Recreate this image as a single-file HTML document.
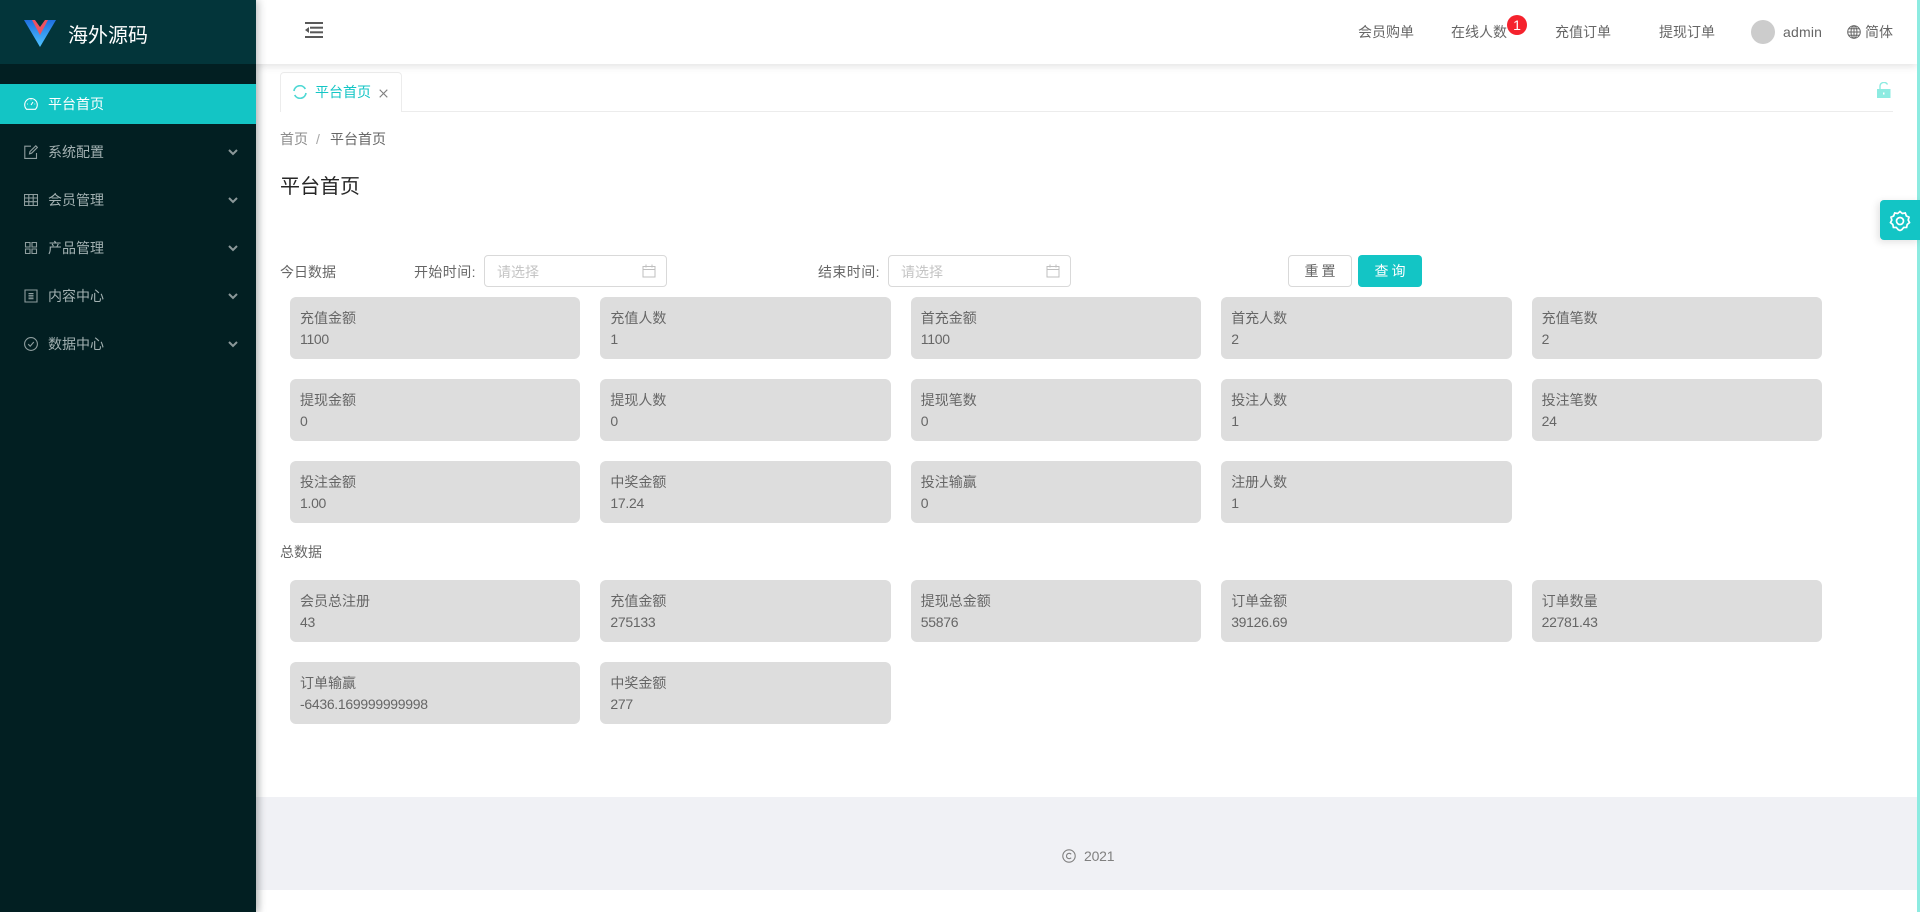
<!DOCTYPE html>
<html lang="zh"><head><meta charset="utf-8"><title>平台首页</title>
<style>
*{box-sizing:border-box;margin:0;padding:0}
html,body{width:1920px;height:912px;overflow:hidden;background:#fff}
body{position:relative;font:14px/20px "Liberation Sans","Noto Sans CJK SC",sans-serif;color:#666}
.a{position:absolute;white-space:nowrap}
#side{position:absolute;left:0;top:0;width:256px;height:912px;background:#021f22;box-shadow:2px 0 8px rgba(29,35,41,.3);z-index:5}
#logo{position:absolute;left:0;top:0;width:256px;height:64px;background:#03353a}
.mi{position:absolute;left:48px;color:#a3b1b2;line-height:20px}
.ic{position:absolute;left:24px;width:14px;height:14px}
.ch{position:absolute;left:228px;width:10px;height:10px}
#hd{position:absolute;left:256px;top:0;width:1661px;height:64px;background:#fff;box-shadow:0 2px 8px rgba(0,0,0,.12);z-index:3}
.c{position:absolute;width:290.4px;height:62px;background:#ddd;border-radius:6px;padding:11px 10px 0;color:#666;line-height:21px}
.c i{font-style:normal;letter-spacing:-.3px}
.inp{position:absolute;top:255px;height:32px;width:183px;border:1px solid #d9d9d9;border-radius:4px;background:#fff;color:#c4c4c4;padding:6px 12px 0}
.inp svg{position:absolute;right:10px;top:8px}
</style></head><body>
<div id="side">
<div id="logo"></div>
<svg class="a" style="left:24px;top:20px" width="32" height="27" viewBox="0 0 32 27"><defs><linearGradient id="g" x1="0" y1="0" x2="0" y2="1"><stop offset="0" stop-color="#1f6fe0"/><stop offset="1" stop-color="#4fc3ff"/></linearGradient></defs><path d="M0 0H32L16 27Z" fill="url(#g)"/><path d="M8 0H24L16 15Z" fill="#ef5261"/><path d="M11 0H21L16 7Z" fill="#03353a"/></svg>
<div class="a" style="left:68px;top:22px;font-size:20px;line-height:28px;color:#fff">海外源码</div>
<div class="a" style="left:0;top:84px;width:256px;height:40px;background:#13c5c5"></div>
<svg class="ic" style="top:97px" viewBox="0 0 14 14" fill="none" stroke="#fff" stroke-width="1.1"><path d="M2.600 12.300A6.300 6.300 0 1 1 11.400 12.300Z"/><path d="M7 8L9 5M3 7H3.800M10.500 7H11.200M7 2.500V3.200"/></svg>
<div class="mi" style="top:94px;color:#fff">平台首页</div>

<svg class="ic" style="top:145px" viewBox="0 0 14 14" fill="none" stroke="#8f9e9f" stroke-width="1.1"><path d="M12.500 8V13.400H.8V1.200H7M5.500 8.800L6 6.500L11.800 .8L13.400 2.400L7.600 8.200Z"/></svg>
<div class="mi" style="top:142px">系统配置</div>
<svg class="ch" style="top:147px" viewBox="0 0 10 10" fill="none" stroke="#8b9899" stroke-width="2"><path d="M1 3L5 7L9 3"/></svg>

<svg class="ic" style="top:193px" viewBox="0 0 14 14" fill="none" stroke="#8f9e9f" stroke-width="1.1"><path d="M.5 1.500H13.500V12.500H.5ZM.5 5H13.500M.5 8.700H13.500M4.800 1.500V12.500M9.200 1.500V12.500"/></svg>
<div class="mi" style="top:190px">会员管理</div>
<svg class="ch" style="top:195px" viewBox="0 0 10 10" fill="none" stroke="#8b9899" stroke-width="2"><path d="M1 3L5 7L9 3"/></svg>

<svg class="ic" style="top:241px" viewBox="0 0 14 14" fill="none" stroke="#8f9e9f" stroke-width="1.1"><path d="M1.500 1.500H6V6H1.500ZM8 1.500H12.500V6H8ZM1.500 8H6V12.500H1.500ZM8 8H12.500V12.500H8Z"/></svg>
<div class="mi" style="top:238px">产品管理</div>
<svg class="ch" style="top:243px" viewBox="0 0 10 10" fill="none" stroke="#8b9899" stroke-width="2"><path d="M1 3L5 7L9 3"/></svg>

<svg class="ic" style="top:289px" viewBox="0 0 14 14" fill="none" stroke="#8f9e9f" stroke-width="1.1"><path d="M1 1H13V13H1ZM4.500 4.500H9.500M4.500 6.300H9.500M4.500 8H9.500M4.500 9.700H9.500"/></svg>
<div class="mi" style="top:286px">内容中心</div>
<svg class="ch" style="top:291px" viewBox="0 0 10 10" fill="none" stroke="#8b9899" stroke-width="2"><path d="M1 3L5 7L9 3"/></svg>

<svg class="ic" style="top:337px" viewBox="0 0 14 14" fill="none" stroke="#8f9e9f" stroke-width="1.1"><circle cx="7" cy="7" r="6.400"/><path d="M4.200 7.200L6.200 9.200L9.800 5"/></svg>
<div class="mi" style="top:334px">数据中心</div>
<svg class="ch" style="top:339px" viewBox="0 0 10 10" fill="none" stroke="#8b9899" stroke-width="2"><path d="M1 3L5 7L9 3"/></svg>
</div>

<div id="hd">
<svg class="a" style="left:49px;top:22px" width="18" height="16" viewBox="0 0 18 16" fill="#595959"><rect x="0" y="0" width="18" height="2"/><rect x="5" y="4.700" width="13" height="2"/><rect x="5" y="9.300" width="13" height="2"/><rect x="0" y="14" width="18" height="2"/><path d="M0 8L4 5V11Z"/></svg>
<div class="a" style="left:1102px;top:22px">会员购单</div>
<div class="a" style="left:1195px;top:22px">在线人数</div>
<div class="a" style="left:1251px;top:15px;width:20px;height:20px;border-radius:50%;background:#f5222d;color:#fff;text-align:center;font-size:14px;line-height:20px">1</div>
<div class="a" style="left:1299px;top:22px">充值订单</div>
<div class="a" style="left:1403px;top:22px">提现订单</div>
<div class="a" style="left:1495px;top:20px;width:24px;height:24px;border-radius:50%;background:#ccc"></div>
<div class="a" style="left:1527px;top:22px;letter-spacing:.2px">admin</div>
<svg class="a" style="left:1591px;top:25px" width="14" height="14" viewBox="0 0 14 14" fill="none" stroke="#666" stroke-width="1"><circle cx="7" cy="7" r="6.300"/><ellipse cx="7" cy="7" rx="3" ry="6.300"/><path d="M7 .7V13.300M.7 7H13.300M1.500 3.800H12.500M1.500 10.200H12.500"/></svg>
<div class="a" style="left:1609px;top:22px">简体</div>
</div>

<div class="a" style="left:256px;top:64px;width:8px;height:848px;background:linear-gradient(90deg,rgba(0,0,0,.06),rgba(0,0,0,0));z-index:2"></div>

<div class="a" style="left:280px;top:111px;width:1613px;height:1px;background:#ececec"></div>
<div class="a" style="left:280px;top:72px;width:122px;height:40px;background:#fff;border:1px solid #ececec;border-bottom:0;border-radius:4px 4px 0 0"></div>
<svg class="a" style="left:293px;top:85px" width="14" height="14" viewBox="0 0 14 14" fill="none" stroke="#4fd8d4" stroke-width="1.700"><path d="M1 6A6 6 0 0 1 12.300 4M13 8A6 6 0 0 1 1.700 10"/></svg>
<div class="a" style="left:315px;top:82px;color:#13c5c5">平台首页</div>
<svg class="a" style="left:379px;top:89px" width="9" height="9" viewBox="0 0 9 9" stroke="#808080" stroke-width="1.100"><path d="M.7 .7L8.300 8.300M8.300 .7L.7 8.300"/></svg>
<svg class="a" style="left:1877px;top:82px" width="15" height="16" viewBox="0 0 15 16"><path d="M3 8V4A4 4 0 0 1 10.500 2.500" fill="none" stroke="#8debe1" stroke-width="1.400"/><rect x="0" y="7" width="13.500" height="9" fill="#8debe1"/><rect x="6" y="10.500" width="1.500" height="2" fill="#fff"/></svg>

<div class="a" style="left:280px;top:129px;color:#8c8c8c">首页</div>
<div class="a" style="left:316px;top:129px;color:#a6a6a6">/</div>
<div class="a" style="left:330px;top:129px">平台首页</div>
<div class="a" style="left:280px;top:173px;font-size:20px;line-height:28px;color:#262626">平台首页</div>

<div class="a" style="left:280px;top:262px">今日数据</div>
<div class="a" style="left:414px;top:262px;letter-spacing:.4px">开始时间:</div>
<div class="inp" style="left:484px">请选择<svg width="14" height="14" viewBox="0 0 14 14" fill="none" stroke="#bfbfbf" stroke-width="1"><path d="M1 2.500H13V13H1ZM1 5.500H13M4 .5V3.500M10 .5V3.500"/></svg></div>
<div class="a" style="left:818px;top:262px;letter-spacing:.4px">结束时间:</div>
<div class="inp" style="left:888px">请选择<svg width="14" height="14" viewBox="0 0 14 14" fill="none" stroke="#bfbfbf" stroke-width="1"><path d="M1 2.500H13V13H1ZM1 5.500H13M4 .5V3.500M10 .5V3.500"/></svg></div>
<div class="a" style="left:1288px;top:255px;width:64px;height:32px;border:1px solid #d9d9d9;border-radius:4px;text-align:center;line-height:30px;letter-spacing:3px;padding-left:3px">重置</div>
<div class="a" style="left:1358px;top:255px;width:64px;height:32px;background:#13c5c5;border-radius:4px;color:#fff;text-align:center;line-height:32px;letter-spacing:3px;padding-left:3px">查询</div>

<div class="c" style="left:290px;top:297px">充值金额<br><i>1100</i></div>
<div class="c" style="left:600.400px;top:297px">充值人数<br><i>1</i></div>
<div class="c" style="left:910.800px;top:297px">首充金额<br><i>1100</i></div>
<div class="c" style="left:1221.200px;top:297px">首充人数<br><i>2</i></div>
<div class="c" style="left:1531.600px;top:297px">充值笔数<br><i>2</i></div>

<div class="c" style="left:290px;top:379px">提现金额<br><i>0</i></div>
<div class="c" style="left:600.400px;top:379px">提现人数<br><i>0</i></div>
<div class="c" style="left:910.800px;top:379px">提现笔数<br><i>0</i></div>
<div class="c" style="left:1221.200px;top:379px">投注人数<br><i>1</i></div>
<div class="c" style="left:1531.600px;top:379px">投注笔数<br><i>24</i></div>

<div class="c" style="left:290px;top:461px">投注金额<br><i>1.00</i></div>
<div class="c" style="left:600.400px;top:461px">中奖金额<br><i>17.24</i></div>
<div class="c" style="left:910.800px;top:461px">投注输赢<br><i>0</i></div>
<div class="c" style="left:1221.200px;top:461px">注册人数<br><i>1</i></div>

<div class="a" style="left:280px;top:542px">总数据</div>

<div class="c" style="left:290px;top:580px">会员总注册<br><i>43</i></div>
<div class="c" style="left:600.400px;top:580px">充值金额<br><i>275133</i></div>
<div class="c" style="left:910.800px;top:580px">提现总金额<br><i>55876</i></div>
<div class="c" style="left:1221.200px;top:580px">订单金额<br><i>39126.69</i></div>
<div class="c" style="left:1531.600px;top:580px">订单数量<br><i>22781.43</i></div>

<div class="c" style="left:290px;top:662px">订单输赢<br><i>-6436.169999999998</i></div>
<div class="c" style="left:600.400px;top:662px">中奖金额<br><i>277</i></div>

<div class="a" style="left:256px;top:797px;width:1661px;height:93px;background:#f0f1f5"></div>
<svg class="a" style="left:1062px;top:849px" width="14" height="14" viewBox="0 0 14 14" fill="none" stroke="#808080" stroke-width="1.100"><circle cx="7" cy="7" r="6.200"/><path d="M9.200 5.200A2.700 2.700 0 1 0 9.200 8.800"/></svg>
<div class="a" style="left:1084px;top:846px;color:#808080;letter-spacing:-.2px">2021</div>

<div class="a" style="left:1917px;top:0;width:3px;height:912px;background:#8debe1;z-index:6"></div>
<div class="a" style="left:1880px;top:200px;width:40px;height:40px;background:#13c5c5;border-radius:4px 0 0 4px;box-shadow:-2px 2px 8px rgba(0,0,0,.12);z-index:7"></div>
<svg class="a" style="left:1889px;top:210px;z-index:8" width="22" height="22" viewBox="0 0 22 22" fill="none" stroke="#fff" stroke-width="1.700"><path d="M11 1.500L13.300 3.500L16.300 3L17.300 5.900L20 7.200L19.200 10L20.500 12.600L18.200 14.500L17.600 17.400L14.700 17.500L12.700 19.800L11 20.500L9.300 19.800L7.300 17.500L4.400 17.400L3.800 14.500L1.500 12.600L2.800 10L2 7.200L4.700 5.900L5.700 3L8.700 3.500Z"/><circle cx="11" cy="11" r="3.500"/></svg>
</body></html>
